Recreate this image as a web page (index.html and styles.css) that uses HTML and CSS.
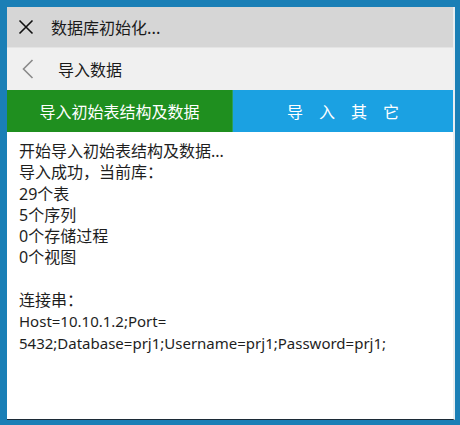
FILE: index.html
```html
<!DOCTYPE html>
<html lang="zh">
<head>
<meta charset="utf-8">
<link rel="stylesheet" href="styles.css">
</head>
<body>
<div class="window">
  <div class="titlebar">
    <svg class="close" width="16" height="16" viewBox="0 0 16 16"><path d="M1.5 1.5 L14.5 14.5 M14.5 1.5 L1.5 14.5" stroke="#111" stroke-width="1.6" fill="none"/></svg>
    <span class="title">数据库初始化...</span>
  </div>
  <div class="navbar">
    <svg class="back" width="12" height="20" viewBox="0 0 12 20"><path d="M10.5 1 L1.5 10 L10.5 19" stroke="#8a8a8a" stroke-width="1.6" fill="none"/></svg>
    <span class="navtitle">导入数据</span>
  </div>
  <div class="tabs">
    <div class="tab tab-green">导入初始表结构及数据</div>
    <div class="tab tab-blue"><span class="spaced">导入其它</span></div>
  </div>
  <div class="content">
    <div>开始导入初始表结构及数据...</div>
    <div>导入成功，当前库：</div>
    <div>29个表</div>
    <div>5个序列</div>
    <div>0个存储过程</div>
    <div>0个视图</div>
    <div>&nbsp;</div>
    <div>连接串：</div>
    <div class="latin">Host=10.10.1.2;Port=</div>
    <div class="latin">5432;Database=prj1;Username=prj1;Password=prj1;</div>
  </div>
</div>
</body>
</html>
```

FILE: styles.css
```css
html, body {
  margin: 0;
  padding: 0;
}
body {
  width: 460px;
  height: 425px;
  background: #1a7fb6;
  box-sizing: border-box;
  padding: 7px 5px 6px 7px;
  font-family: "Noto Sans", "Noto Sans CJK SC", sans-serif;
  font-size: 16px;
  color: #1e1e1e;
}
.window {
  height: 100%;
  display: flex;
  flex-direction: column;
  background: #ffffff;
  border-right: 2px solid #e8eef2;
  border-bottom: 1px solid #1c2a36;
}
.titlebar {
  height: 40px;
  flex: none;
  background: #d6d6d6;
  display: flex;
  align-items: center;
  border-bottom: 1px solid #e4e4e4;
}
.close {
  margin-left: 11px;
  margin-top: -1px;
}
.title {
  margin-left: 17px;
  font-family: "Noto Sans CJK SC", sans-serif;
  font-size: 16px;
  color: #1a1a1a;
}
.navbar {
  height: 42px;
  flex: none;
  background: #f0f0f0;
  display: flex;
  align-items: center;
}
.back {
  margin-left: 15px;
}
.navtitle {
  margin-left: 24px;
  font-family: "Noto Sans CJK SC", sans-serif;
  font-size: 16px;
  color: #1a1a1a;
}
.tabs {
  height: 42px;
  flex: none;
  display: flex;
}
.tab {
  display: flex;
  align-items: center;
  justify-content: center;
  color: #ffffff;
  font-family: "Noto Sans CJK SC", sans-serif;
  font-size: 16px;
}
.tab-green {
  width: 225px;
  background: #1f8f1f;
  border-right: 1px solid #2a9e5a;
}
.tab-blue {
  flex: 1;
  background: #1ba1e2;
}
.spaced {
  letter-spacing: 16px;
  padding-left: 16px;
}
.content {
  flex: 1;
  padding: 9px 12px 0 12px;
  line-height: 21.3px;
}
.latin {
  font-size: 15px;
}
```
